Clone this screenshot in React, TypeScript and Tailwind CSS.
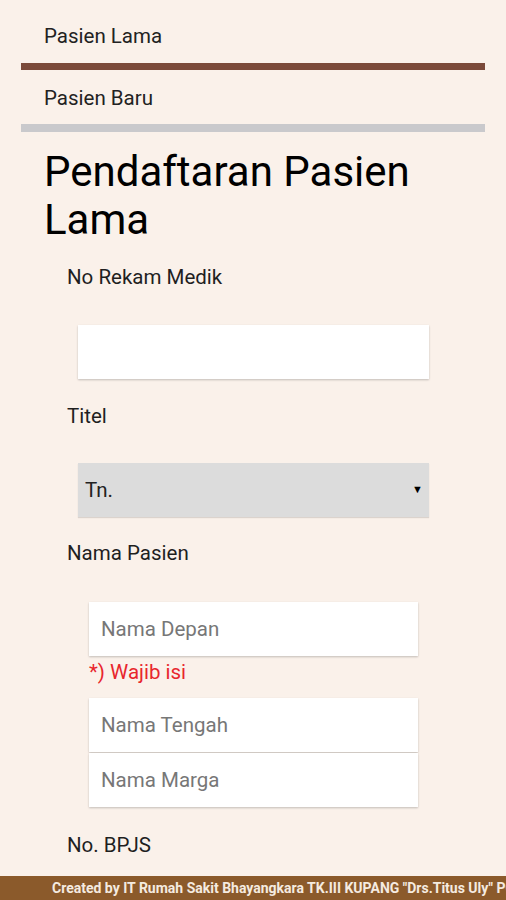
export default function App() {
  const field = 'block h-[54px] bg-white shadow-[0_1px_2px_rgba(0,0,0,0.22)] outline-none'

  return (
    <div className="flex h-screen flex-col overflow-hidden bg-[#faf1ea] font-['Roboto',sans-serif] text-[#1f1f1f]">
      <main className="flex-1 overflow-hidden">
        {/* Tabs */}
        <div className="mx-[21px]">
          <div className="pl-[23px] pt-[24px] pb-[15px] text-[20.5px] leading-[24px] text-[#222]">Pasien Lama</div>
          <div className="h-[7px] bg-[#7b4a3a]" />
          <div className="pl-[23px] pt-[16px] pb-[14px] text-[20.5px] leading-[24px] text-[#222]">Pasien Baru</div>
          <div className="h-[8px] bg-[#c9c9cc]" />
        </div>

        <h1 className="ml-[44px] mt-[16px] text-[42px] leading-[48px] font-normal text-black">
          Pendaftaran Pasien
          <br />
          Lama
        </h1>

        <div className="ml-[67px] mt-[21px] text-[20.5px] leading-[24px]">No Rekam Medik</div>
        <input type="text" className={`${field} ml-[78px] mt-[36px] w-[351px] px-2 text-[20.5px]`} />

        <div className="ml-[67px] mt-[25px] text-[20.5px] leading-[24px]">Titel</div>
        <div className="relative ml-[78px] mt-[35px] w-[351px]">
          <div className="flex h-[54px] items-center bg-[#dcdcdc] pl-[7px] text-[20.5px] text-[#222] shadow-[0_1px_1px_rgba(0,0,0,0.12)]">
            Tn.
          </div>
          <span className="absolute right-[6px] top-1/2 -translate-y-1/2 text-[11px] text-black">▼</span>
        </div>

        <div className="ml-[67px] mt-[24px] text-[20.5px] leading-[24px]">Nama Pasien</div>
        <input
          type="text"
          placeholder="Nama Depan"
          className={`${field} ml-[89px] mt-[37px] w-[329px] px-3 text-[20.5px] placeholder:text-[#777]`}
        />
        <div className="ml-[89px] mt-[4px] text-[20.5px] leading-[24px] text-[#e8262d]">*) Wajib isi</div>
        <input
          type="text"
          placeholder="Nama Tengah"
          className={`${field} ml-[89px] mt-[14px] h-[53px] w-[329px] px-3 text-[20.5px] placeholder:text-[#777]`}
        />
        <input
          type="text"
          placeholder="Nama Marga"
          className={`${field} ml-[89px] mt-[1px] h-[52px] w-[329px] px-3 text-[20.5px] placeholder:text-[#777]`}
        />

        <div className="ml-[67px] mt-[26px] text-[20.5px] leading-[24px]">No. BPJS</div>
      </main>

      <footer className="h-[24px] shrink-0 overflow-hidden whitespace-nowrap bg-[#8b5a2b] pl-[52px] text-[14px] leading-[24px] font-bold text-[#f5ebe0]">
        Created by IT Rumah Sakit Bhayangkara TK.III KUPANG "Drs.Titus Uly" POLDA NTT
      </footer>
    </div>
  )
}
